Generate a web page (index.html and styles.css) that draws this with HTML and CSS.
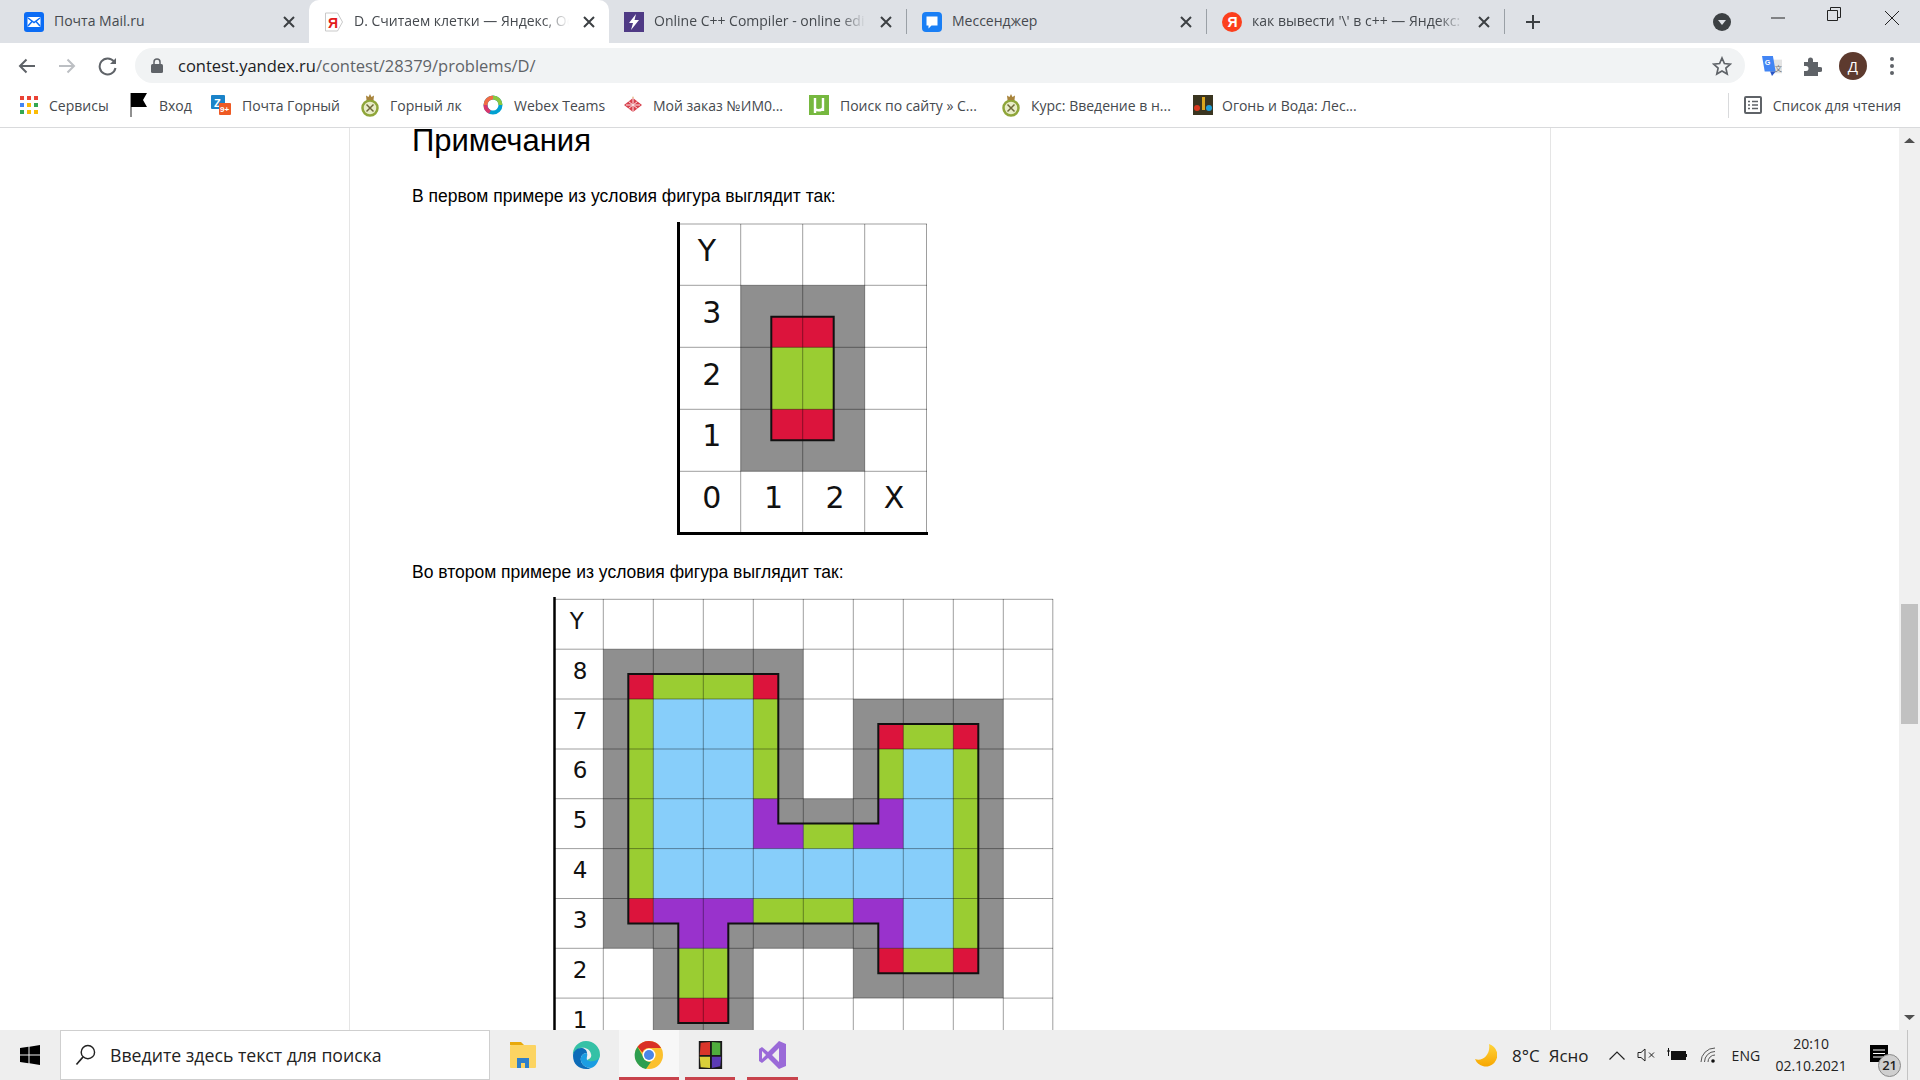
FILE: index.html
```html
<!DOCTYPE html>
<html lang="en">
<head>
    <meta charset="UTF-8">
    <title>D. Считаем клетки</title>
    <link rel="stylesheet" href="styles.css">
</head>
<body>
    <!-- Tabs -->
    <div class="tabstrip">
        <div class="tab tab-first">
            <svg class="favicon" viewBox="0 0 20 20"><rect width="20" height="20" rx="3" fill="#0b6cf5"/><rect x="3.500" y="5" width="13" height="10" rx="1" fill="#fff"/><path d="M4 6l6 4.500L16 6M4 14l4-4.500M16 14l-4-4.500" fill="none" stroke="#0b6cf5" stroke-width="1.500"/></svg>
            <span class="tab-title tab-title-full">Почта Mail.ru</span>
            <svg class="tab-close" viewBox="0 0 16 16"><path d="M3 3l10 10M13 3L3 13"/></svg>
        </div>
        <div class="tab tab-active">
            <svg class="favicon" viewBox="0 0 20 20"><path d="M1.500 1h12l5 9-5 9h-12z" fill="#fff" stroke="#c9c9c9"/><text x="4" y="15.500" class="ya-red">Я</text></svg>
            <span class="tab-title">D. Считаем клетки — Яндекс, Ос</span>
            <svg class="tab-close" viewBox="0 0 16 16"><path d="M3 3l10 10M13 3L3 13"/></svg>
        </div>
        <div class="tab tab-third">
            <svg class="favicon" viewBox="0 0 20 20"><rect width="20" height="20" fill="#4f3a85"/><path d="M12 2L5 11h4l-2 7 8-10h-4.500z" fill="#fff"/></svg>
            <span class="tab-title">Online C++ Compiler - online edi</span>
            <svg class="tab-close" viewBox="0 0 16 16"><path d="M3 3l10 10M13 3L3 13"/></svg>
        </div>
        <span class="tab-sep"></span>
        <div class="tab tab-fourth">
            <svg class="favicon" viewBox="0 0 20 20"><rect width="20" height="20" rx="4" fill="#1a7ff5"/><path d="M4.500 4.500h11v9h-6l-3 3v-3h-2z" fill="#fff"/></svg>
            <span class="tab-title tab-title-full">Мессенджер</span>
            <svg class="tab-close" viewBox="0 0 16 16"><path d="M3 3l10 10M13 3L3 13"/></svg>
        </div>
        <span class="tab-sep"></span>
        <div class="tab tab-fifth">
            <svg class="favicon" viewBox="0 0 20 20"><circle cx="10" cy="10" r="10" fill="#fc3f1d"/><text x="5.500" y="15" class="ya-white">Я</text></svg>
            <span class="tab-title">как вывести '\' в с++ — Яндекс:</span>
            <svg class="tab-close" viewBox="0 0 16 16"><path d="M3 3l10 10M13 3L3 13"/></svg>
        </div>
        <span class="tab-sep"></span>
        <svg class="new-tab" viewBox="0 0 16 16"><path d="M8 1v14M1 8h14"/></svg>
        <svg class="tab-search" viewBox="0 0 18 18"><circle cx="9" cy="9" r="9" fill="#3c4043"/><path d="M5 7h8l-4 5z" fill="#dee1e6"/></svg>
        <svg class="win-min" viewBox="0 0 14 14"><path d="M0 7h14"/></svg>
        <svg class="win-max" viewBox="0 0 14 14"><path d="M.5 3.500h10v10H.5zM3.500 3.500V.5h10v10h-3"/></svg>
        <svg class="win-close" viewBox="0 0 14 14"><path d="M0 0l14 14M14 0L0 14"/></svg>
    </div>

    <!-- Address bar -->
    <div class="toolbar">
        <svg class="nav-btn" viewBox="0 0 40 20"><path d="M28 10H13M19.500 3.500L13 10l6.500 6.500" stroke="#5f6368"/></svg>
        <svg class="nav-btn" viewBox="0 0 40 20"><path d="M12 10h15M20.500 3.500L27 10l-6.500 6.500" stroke="#bcbfc3"/></svg>
        <svg class="nav-btn" viewBox="-1 0 40 20"><path d="M26 5.500A8 8 0 1 0 27.500 12" stroke="#5f6368"/><path d="M28 2v6h-6z" fill="#5f6368" stroke="none"/></svg>
        <div class="omnibox">
            <svg class="lock" viewBox="0 0 12 15"><rect y="6" width="12" height="9" rx="1.500" fill="#5f6368"/><path d="M3 6.500V4a3 3 0 0 1 6 0v2.500" fill="none" stroke="#5f6368" stroke-width="1.500"/></svg>
            <span class="url"><span class="url-host">contest.yandex.ru</span>/contest/28379/problems/D/</span>
            <svg class="star" viewBox="0 0 20 20"><path d="M10 2l2.400 5.500 6 .6-4.500 4 1.300 5.900L10 15l-5.200 3 1.300-5.900-4.500-4 6-.6z" fill="none" stroke="#5f6368" stroke-width="1.700"/></svg>
        </div>
        <div class="ext-slot ext-first">
            <svg class="ext-icon" viewBox="0 0 22 24"><rect x="9" y="5" width="13" height="15" fill="#e4e4e4"/><path d="M0 1h12l3 17H3z" fill="#4285f4"/><path d="M9 18h6l-4 5z" fill="#2a56c6"/><text x="3" y="11" class="translate-g">G</text><text x="14" y="18" class="translate-x">文</text></svg>
        </div>
        <div class="ext-slot">
            <svg class="ext-icon" viewBox="0 0 20 20"><path d="M2 6h4V4a2.500 2.500 0 0 1 5 0v2h5v5h2a2.500 2.500 0 0 1 0 5h-2v4H2v-5h2a2.500 2.500 0 0 0 0-5H2z" fill="#5f6368"/></svg>
        </div>
        <div class="ext-slot ext-avatar"><span class="avatar">Д</span></div>
        <div class="ext-slot">
            <svg class="dots" viewBox="0 0 4 20"><circle cx="2" cy="3" r="2"/><circle cx="2" cy="10" r="2"/><circle cx="2" cy="17" r="2"/></svg>
        </div>
    </div>

    <!-- Bookmarks -->
    <div class="bookmarks">
        <div class="bookmark">
            <svg class="bm-icon" viewBox="0 0 18 18"><g><rect width="4" height="4" fill="#ea4335"/><rect x="7" width="4" height="4" fill="#ea4335"/><rect x="14" width="4" height="4" fill="#ea4335"/><rect y="7" width="4" height="4" fill="#4285f4"/><rect x="7" y="7" width="4" height="4" fill="#fbbc05"/><rect x="14" y="7" width="4" height="4" fill="#34a853"/><rect y="14" width="4" height="4" fill="#34a853"/><rect x="7" y="14" width="4" height="4" fill="#fbbc05"/><rect x="14" y="14" width="4" height="4" fill="#fbbc05"/></g></svg>
            <span>Сервисы</span>
        </div>
        <div class="bookmark">
            <svg class="bm-icon bm-flag" viewBox="0 0 18 24"><path d="M1 0v24" stroke="#222" fill="none"/><path d="M1 0h16l-4 7 4 7H1z" fill="#000"/></svg>
            <span>Вход</span>
        </div>
        <div class="bookmark">
            <svg class="bm-icon bm-wide" viewBox="0 0 20 20"><rect width="14" height="14" rx="1" fill="#1a83c9"/><text x="3" y="12" class="zm-z">Z</text><rect x="8" y="8" width="12" height="12" rx="1" fill="#ee5a24"/><text x="9" y="17" class="zm-n">9+</text></svg>
            <span>Почта Горный</span>
        </div>
        <div class="bookmark">
            <svg class="bm-icon bm-crest" viewBox="0 0 18 24"><circle cx="9" cy="15" r="7.500" fill="#e8edc8" stroke="#8fa63a" stroke-width="2.500"/><path d="M5.500 11.500l7 7M12.500 11.500l-7 7" stroke="#6f6a3a" stroke-width="1.500"/><path d="M5.500 7L5 2.500l2.500 1.500L9 1l1.500 3L13 2.500 12.500 7z" fill="#a8843c"/></svg>
            <span>Горный лк</span>
        </div>
        <div class="bookmark">
            <svg class="bm-icon bm-wide" viewBox="0 0 20 20"><circle cx="10" cy="10" r="7.500" fill="none" stroke="#00a0d1" stroke-width="4"/><path d="M10 2.500A7.500 7.500 0 0 1 17.500 10" fill="none" stroke="#8dc63f" stroke-width="4"/><path d="M2.500 10A7.500 7.500 0 0 1 10 2.500" fill="none" stroke="#f26b43" stroke-width="4"/><path d="M2.500 10A7.500 7.500 0 0 0 7 17" fill="none" stroke="#d9366b" stroke-width="4"/></svg>
            <span>Webex Teams</span>
        </div>
        <div class="bookmark">
            <svg class="bm-icon" viewBox="0 0 18 18"><path d="M9 2l9 7-9 7-9-7z" fill="#d8424e"/><path d="M4.500 5.500l9 7M13.500 5.500l-9 7M9 2v14M2 9h14" stroke="#fbe3e5"/><circle cx="9" cy="1.500" r="1" fill="#e9c9a0"/></svg>
            <span>Мой заказ №ИМ0...</span>
        </div>
        <div class="bookmark">
            <svg class="bm-icon bm-wide" viewBox="0 0 20 20"><rect width="20" height="20" fill="#76b83f"/><path d="M6 3v15M6 13c0 3 7 3 8 0M14 3v13" fill="none" stroke="#fff" stroke-width="2.400"/></svg>
            <span>Поиск по сайту » С...</span>
        </div>
        <div class="bookmark">
            <svg class="bm-icon bm-crest" viewBox="0 0 18 24"><circle cx="9" cy="15" r="7.500" fill="#e8edc8" stroke="#8fa63a" stroke-width="2.500"/><path d="M5.500 11.500l7 7M12.500 11.500l-7 7" stroke="#6f6a3a" stroke-width="1.500"/><path d="M5.500 7L5 2.500l2.500 1.500L9 1l1.500 3L13 2.500 12.500 7z" fill="#a8843c"/></svg>
            <span>Курс: Введение в н...</span>
        </div>
        <div class="bookmark bookmark-game">
            <svg class="bm-icon bm-wide" viewBox="0 0 20 20"><rect width="20" height="20" fill="#3a3520"/><path d="M9 2h3v13H9z" fill="#d9a61e"/><circle cx="4" cy="13" r="3" fill="#d9381e"/><circle cx="16" cy="13" r="3" fill="#1ea0d9"/></svg>
            <span>Огонь и Вода: Лес...</span>
        </div>
        <div class="reading-list">
            <svg class="bm-icon" viewBox="0 0 18 18"><rect x="1" y="1" width="16" height="16" rx="1" fill="none" stroke="#5f6368" stroke-width="2"/><path d="M4 5.500h2M8 5.500h6M4 9h2M8 9h6M4 12.500h2M8 12.500h6" stroke="#5f6368" stroke-width="1.500"/></svg>
            <span>Список для чтения</span>
        </div>
    </div>

    <!-- Page -->
    <div class="viewport">
        <div class="side"></div>
        <div class="content">
            <h2 class="notes-title">Примечания</h2>
            <p class="note note-first">В первом примере из условия фигура выглядит так:</p>

            <svg class="figure figure-small" viewBox="676 222 252 313" width="252" height="313">
                <rect x="740.700" y="285.300" width="124" height="186" fill="#8f8f8f"/>
                <rect x="771.300" y="316.700" width="62.400" height="123.600" fill="#dc143c"/>
                <rect x="771.300" y="347.300" width="62.400" height="62" fill="#9acd32"/>
                <g class="grid-lines">
                    <path d="M740.700 224v308M802.700 224v308M864.700 224v308M926.500 224v308"/>
                    <path d="M678 224h249M678 285.300h249M678 347.300h249M678 409.300h249M678 471.300h249"/>
                </g>
                <path class="shape-line" d="M771.300 316.700h62.400v123.600h-62.400z"/>
                <path class="axis" d="M678.500 222v311.500H928"/>
                <text class="cell-big" x="707" y="261">Y</text>
                <text class="cell-big" x="711.700" y="322.500">3</text>
                <text class="cell-big" x="711.700" y="384.500">2</text>
                <text class="cell-big" x="711.700" y="446">1</text>
                <text class="cell-big" x="711.700" y="508">0</text>
                <text class="cell-big" x="773.500" y="508">1</text>
                <text class="cell-big" x="835" y="508">2</text>
                <text class="cell-big" x="894" y="508">X</text>
            </svg>

            <p class="note note-second">Во втором примере из условия фигура выглядит так:</p>

            <svg class="figure figure-large" viewBox="552 597 503 500" width="503" height="500">
                <path fill="#8f8f8f" d="M603.300 649.200H803.300V798.700H853.300V699H1003.300V998.100H853.300V948.300H753.300V1048H653.300V948.300H603.300z"/>
                <path fill="#87cefa" d="M628.300 674.100H778.300V823.600H878.300V724H978.300V973.200H878.300V923.400H728.300V1023.100H678.300V923.400H628.300z"/>
                <g fill="#9acd32">
                    <rect x="628.300" y="674.100" width="150" height="25"/>
                    <rect x="628.300" y="699" width="25" height="224.400"/>
                    <rect x="753.300" y="699" width="25" height="100"/>
                    <rect x="678.300" y="948.300" width="50" height="50"/>
                    <rect x="803.300" y="823.600" width="50" height="25"/>
                    <rect x="753.300" y="898.500" width="100" height="25"/>
                    <rect x="878.300" y="724" width="100" height="25"/>
                    <rect x="878.300" y="749" width="25" height="50"/>
                    <rect x="953.300" y="749" width="25" height="224.200"/>
                    <rect x="878.300" y="948.300" width="100" height="25"/>
                </g>
                <path fill="#9932cc" d="M753.300 798.700h25v24.900h25v25h-50zM853.300 823.600h25v-24.900h25v49.900h-50zM653.300 898.500h100v25h-25v24.800h-50v-24.800h-25zM853.300 898.500h50v49.800h-25v-24.900h-25z"/>
                <g fill="#dc143c">
                    <rect x="628.300" y="674.100" width="25" height="25"/>
                    <rect x="753.300" y="674.100" width="25" height="25"/>
                    <rect x="628.300" y="898.500" width="25" height="25"/>
                    <rect x="678.300" y="998.100" width="50" height="25"/>
                    <rect x="878.300" y="724" width="25" height="25"/>
                    <rect x="953.300" y="724" width="25" height="25"/>
                    <rect x="878.300" y="948.300" width="25" height="25"/>
                    <rect x="953.300" y="948.300" width="25" height="25"/>
                </g>
                <g class="grid-lines">
                    <path d="M603.300 599v498M653.300 599v498M703.300 599v498M753.300 599v498M803.300 599v498M853.300 599v498M903.300 599v498M953.300 599v498M1003.300 599v498M1052.800 599v498"/>
                    <path d="M554 599.300h499M554 649.200h499M554 699h499M554 749h499M554 798.700h499M554 848.600h499M554 898.500h499M554 948.300h499M554 998.100h499"/>
                </g>
                <path class="shape-line" d="M628.300 674.100H778.300V823.600H878.300V724H978.300V973.200H878.300V923.400H728.300V1023.100H678.300V923.400H628.300z"/>
                <path class="axis axis-thin" d="M554.500 597v500"/>
                <text class="cell-small" x="576.700" y="629">Y</text>
                <text class="cell-small" x="580" y="678.500">8</text>
                <text class="cell-small" x="580" y="728.500">7</text>
                <text class="cell-small" x="580" y="778">6</text>
                <text class="cell-small" x="580" y="828">5</text>
                <text class="cell-small" x="580" y="878">4</text>
                <text class="cell-small" x="580" y="928">3</text>
                <text class="cell-small" x="580" y="978">2</text>
                <text class="cell-small" x="580" y="1028">1</text>
            </svg>
        </div>
        <div class="side side-right"></div>
        <div class="scrollbar">
            <svg class="scroll-arrow" viewBox="0 0 21 24"><path d="M5 15l5.500-5 5.500 5z"/></svg>
            <div class="scroll-thumb"></div>
            <svg class="scroll-arrow scroll-arrow-down" viewBox="0 0 21 24"><path d="M5 9l5.500 5 5.500-5z"/></svg>
        </div>
    </div>

    <!-- Windows taskbar -->
    <div class="taskbar">
        <div class="start">
            <svg class="start-icon" viewBox="0 0 20 20"><path d="M0 3l8.500-1.200v7.700H0zM9.500 1.700L20 0v9.500H9.500zM0 10.500h8.500v7.700L0 17zM9.500 10.500H20V20L9.500 18.300z" fill="#000"/></svg>
        </div>
        <div class="search">
            <svg class="search-icon" viewBox="0 0 22 24"><circle cx="13.500" cy="9" r="7" fill="none" stroke="#222" stroke-width="1.500"/><path d="M8.500 14L1.500 22" stroke="#222" stroke-width="1.700"/></svg>
            <span>Введите здесь текст для поиска</span>
        </div>
        <div class="app app-explorer">
            <svg class="app-icon" viewBox="0 0 28 28"><path d="M1 1h11l3 3H1z" fill="#e8a90c"/><rect x="1" y="4" width="26" height="23" rx="1" fill="#fcd462"/><path d="M8 27v-10h12v10h-4v-5h-4v5z" fill="#2f7fc9"/></svg>
        </div>
        <div class="app app-edge">
            <svg class="app-icon app-icon-large" viewBox="0 0 30 30"><path d="M15 1a14 14 0 0 1 14 14c0 5-4 7-8 7-3 0-5-1-5-2 3-1 5-3 4-6-1-5-6-7-10-6C5 9 2 13 2 16 1 8 7 1 15 1z" fill="#35c1a6"/><path d="M2 16c0-5 4-8 8-8 3 0 6 2 6 5-4 0-7 3-6 8 1 4 5 7 10 7-2 1-3 1-5 1C8 29 2 24 2 16z" fill="#0c6cb8"/><path d="M16 20c3 2 9 2 12-2-1 5-4 9-8 10-5 0-9-3-10-7-1-5 2-8 6-8 1 2-1 5 0 7z" fill="#1b9de2"/></svg>
        </div>
        <div class="app app-chrome">
            <svg class="app-icon app-icon-large" viewBox="0 0 30 30"><circle cx="15" cy="15" r="14" fill="#fbc02d"/><path d="M15 1a14 14 0 0 1 12.100 7H15a7 7 0 0 0-6.600 4.500L3.500 6.800A14 14 0 0 1 15 1z" fill="#d93025"/><path d="M3.500 6.800l6 10.500a7 7 0 0 0 7.500 4.500L12 29A14 14 0 0 1 3.500 6.800z" fill="#2e9e4f"/><circle cx="15" cy="15" r="6.500" fill="#fff"/><circle cx="15" cy="15" r="5" fill="#4a86e8"/></svg>
        </div>
        <div class="app app-blocks">
            <svg class="app-icon" viewBox="0 0 28 30"><path d="M2 0h25v30H2z" fill="#1a1a1a"/><path d="M4 2l10-1v14H3z" fill="#d9352a"/><path d="M16 1l9 1v13h-9z" fill="#4fae3d"/><path d="M3 17h11v12l-10-1z" fill="#d9cf3a"/><path d="M16 17h10l-1 10-9 2z" fill="#5b3bb5"/></svg>
        </div>
        <div class="app app-vs">
            <svg class="app-icon app-icon-large" viewBox="0 0 30 30"><path d="M21 1l7 3v22l-7 3-11-11-6 5-3-2v-12l3-2 6 5z" fill="#9a6ad8"/><path d="M21 8l-7 7 7 7zM4 11v8l4-4z" fill="#eee"/></svg>
        </div>
        <div class="tray">
            <svg class="tray-moon" viewBox="0 0 22 23"><defs><linearGradient id="moonFill" x1="0" y1="0" x2="0" y2="1"><stop offset="0" stop-color="#ffd43b"/><stop offset="1" stop-color="#f7a600"/></linearGradient></defs><path d="M14 0a11.500 11.500 0 1 1-14 15c7 3 16-4 14-15z" fill="url(#moonFill)"/></svg>
            <span class="weather weather-temp">8°C</span>
            <span class="weather weather-text">Ясно</span>
            <svg class="tray-chevron" viewBox="0 0 16 9"><path d="M.5 8.500L8 1l7.500 7.500"/></svg>
            <svg class="tray-sound" viewBox="0 0 18 14"><path d="M1 4.500h3L8 1v12L4 9.500H1z" fill="none" stroke="#222"/><path d="M12 4.500l5 5M17 4.500l-5 5" stroke="#222" fill="none"/></svg>
            <svg class="tray-battery" viewBox="0 0 20 14"><path d="M0 3h3M1.500 0v5M1.500 5v3" stroke="#111" fill="none"/><rect x="4" y="3" width="15" height="9" fill="#111"/><rect x="19" y="6" width="1" height="3" fill="#111"/></svg>
            <svg class="tray-wifi" viewBox="0 0 16 16"><path d="M1 15a14 14 0 0 1 14-14M4.500 15a10.500 10.500 0 0 1 10.500-10.500M8 15a7 7 0 0 1 7-7" fill="none" stroke="#555"/><circle cx="13" cy="14" r="1.800" fill="#111"/></svg>
            <span class="tray-lang">ENG</span>
            <div class="clock"><span>20:10</span><span>02.10.2021</span></div>
            <div class="notify">
                <svg class="notify-icon" viewBox="0 0 18 17"><rect width="18" height="17" fill="#000"/><path d="M3 5h12M3 8.500h12M3 12h12" stroke="#fff"/></svg>
                <span class="notify-badge">21</span>
            </div>
            <span class="show-desktop"></span>
        </div>
    </div>
</body>
</html>
```

FILE: styles.css
```css
* {
    box-sizing: border-box;
}
html, body {
    margin: 0;
    height: 100%;
}
body {
    width: 1920px;
    height: 1080px;
    overflow: hidden;
    display: flex;
    flex-direction: column;
    background-color: #fff;
    color: #3c4043;
    font-family: "Open Sans", "Noto Sans", sans-serif;
}

/* tabs */
.tabstrip {
    height: 43px;
    flex: none;
    display: flex;
    align-items: center;
    padding-left: 9px;
    background-color: #dee1e6;
}
.tab {
    height: 43px;
    flex: none;
    display: flex;
    align-items: center;
    padding: 0 12px 0 15px;
    font-size: 14px;
    color: #45494e;
}
.tab-first, .tab-active {
    width: 300px;
}
.tab-third {
    width: 297px;
}
.tab-fourth {
    width: 299px;
}
.tab-fifth {
    width: 297px;
}
.tab-active {
    background-color: #fff;
    border-radius: 10px 10px 0 0;
}
.favicon {
    width: 20px;
    height: 20px;
    flex: none;
    margin-right: 10px;
}
.tab-title {
    flex: 1;
    min-width: 0;
    margin-bottom: 2px;
    white-space: nowrap;
    -webkit-mask-image: linear-gradient(to right, #000 calc(100% - 30px), transparent calc(100% - 4px));
    mask-image: linear-gradient(to right, #000 calc(100% - 30px), transparent calc(100% - 4px));
}
.tab-title-full {
    -webkit-mask-image: none;
    mask-image: none;
}
.tab-close {
    width: 16px;
    height: 16px;
    flex: none;
    margin-left: 8px;
    fill: none;
    stroke: #3c4043;
    stroke-width: 2;
}
.tab-sep {
    width: 1px;
    height: 25px;
    flex: none;
    background-color: #9aa0a6;
}
.new-tab {
    width: 16px;
    height: 16px;
    flex: none;
    margin-left: 20px;
    fill: none;
    stroke: #3c4043;
    stroke-width: 2;
}
.tab-search {
    width: 18px;
    height: 18px;
    flex: none;
    margin-left: 172px;
}
.win-min, .win-max, .win-close {
    flex: none;
    width: 14px;
    height: 14px;
    fill: none;
    stroke: #222;
    stroke-width: 1;
    margin-bottom: 7px;
}
.win-min {
    margin-left: 40px;
}
.win-max {
    margin-left: 42px;
    margin-bottom: 15px;
}
.win-close {
    margin-left: 44px;
}
.ya-red {
    font: bold 14px "Liberation Sans", sans-serif;
    fill: #e21a1a;
}
.ya-white {
    font: bold 14px "Liberation Sans", sans-serif;
    fill: #fff;
}

/* toolbar */
.toolbar {
    height: 40px;
    flex: none;
    display: flex;
    align-items: stretch;
    padding: 5px 0 0 7px;
}
.nav-btn {
    width: 40px;
    height: 20px;
    flex: none;
    align-self: center;
    fill: none;
    stroke-width: 2;
}
.omnibox {
    width: 1610px;
    flex: none;
    margin-left: 8px;
    display: flex;
    align-items: center;
    padding: 0 13px 0 16px;
    border-radius: 18px;
    background-color: #f1f3f4;
}
.lock {
    width: 12px;
    height: 15px;
    flex: none;
}
.url {
    flex: 1;
    margin-left: 15px;
    font-size: 16.500px;
    color: #5f6368;
}
.url-host {
    color: #202124;
}
.star {
    width: 20px;
    height: 20px;
    flex: none;
}
.ext-first {
    margin-left: 7px;
}
.ext-slot {
    width: 40px;
    flex: none;
    display: flex;
    align-items: center;
    justify-content: center;
}
.ext-avatar {
    padding-left: 2px;
}
.ext-icon {
    width: 20px;
    height: 22px;
}
.translate-g {
    font: bold 8px "Liberation Sans", sans-serif;
    fill: #fff;
}
.translate-x {
    font: 8px "Noto Sans CJK SC", sans-serif;
    fill: #777;
}
.avatar {
    width: 28px;
    height: 28px;
    border-radius: 50%;
    background-color: #5d3a2e;
    color: #fff;
    font-size: 15px;
    line-height: 28px;
    text-align: center;
}
.dots {
    width: 4px;
    height: 20px;
    fill: #5f6368;
}

/* bookmarks */
.bookmarks {
    height: 45px;
    flex: none;
    display: grid;
    grid-template-columns: 110px 81px 150px 122px 141px 185px 193px 191px 1fr auto;
    align-items: center;
    padding-left: 20px;
    border-bottom: 1px solid #d9dadc;
    font-size: 14px;
    color: #45494e;
}
.bookmark {
    display: flex;
    align-items: center;
    gap: 11px;
    white-space: nowrap;
}
.bookmark-game {
    gap: 9px;
}
.bm-icon {
    width: 18px;
    height: 18px;
    flex: none;
}
.bm-wide {
    width: 20px;
    height: 20px;
}
.bm-flag {
    height: 24px;
}
.bm-crest {
    height: 24px;
}
.zm-z {
    font: bold 11px "Liberation Sans", sans-serif;
    fill: #fff;
}
.zm-n {
    font: bold 8px "Liberation Sans", sans-serif;
    fill: #fff;
}
.reading-list {
    display: flex;
    align-items: center;
    gap: 11px;
    height: 25px;
    padding: 0 19px 0 15px;
    border-left: 1px solid #d9dadc;
}

/* page */
.viewport {
    flex: 1;
    min-height: 0;
    overflow: hidden;
    display: flex;
}
.side {
    width: 349px;
    flex: none;
}
.side-right {
    width: 348px;
}
.content {
    width: 1202px;
    flex: none;
    padding-left: 62px;
    border-left: 1px solid #e5e5e5;
    border-right: 1px solid #e5e5e5;
    font-family: "Liberation Sans", Arial, sans-serif;
    color: #000;
}
.notes-title {
    margin: 0;
    padding-top: 1px;
    font-size: 31px;
    font-weight: normal;
    line-height: 24px;
}
.note {
    margin: 0;
    font-size: 17.500px;
    line-height: 24px;
}
.note-first {
    margin-top: 31px;
}
.note-second {
    margin-top: 25px;
}
.figure {
    display: block;
}
.figure-small {
    margin: 14px 0 0 264px;
}
.figure-large {
    margin: 13px 0 0 140px;
}
.grid-lines {
    fill: none;
    stroke: rgba(0, 0, 0, 0.38);
    stroke-width: 1;
}
.shape-line {
    fill: none;
    stroke: #111;
    stroke-width: 2;
}
.axis {
    fill: none;
    stroke: #000;
    stroke-width: 3;
}
.axis-thin {
    stroke-width: 2.500;
}
.cell-big, .cell-small {
    font-family: "DejaVu Sans", sans-serif;
    text-anchor: middle;
    fill: #111;
}
.cell-big {
    font-size: 30px;
}
.cell-small {
    font-size: 23px;
}

/* scrollbar */
.scrollbar {
    width: 21px;
    flex: none;
    display: flex;
    flex-direction: column;
    background-color: #f0f0f0;
}
.scroll-arrow {
    width: 21px;
    height: 24px;
    flex: none;
    fill: #505050;
}
.scroll-thumb {
    width: 17px;
    height: 120px;
    margin: 452px 0 0 2px;
    background-color: #c1c1c1;
}
.scroll-arrow-down {
    margin-top: auto;
}

/* taskbar */
.taskbar {
    height: 50px;
    flex: none;
    display: flex;
    align-items: stretch;
    background-color: #eeeeee;
    color: #222;
}
.start {
    width: 60px;
    flex: none;
    display: flex;
    align-items: center;
    justify-content: center;
}
.start-icon {
    width: 20px;
    height: 20px;
}
.search {
    width: 430px;
    flex: none;
    display: flex;
    align-items: center;
    gap: 14px;
    padding-left: 14px;
    background-color: #fff;
    border: 1px solid #cfcfcf;
    font-size: 17.700px;
}
.search-icon {
    width: 21px;
    height: 24px;
    flex: none;
}
.app {
    flex: none;
    display: flex;
    align-items: center;
    justify-content: center;
}
.app-icon {
    width: 28px;
    height: 28px;
}
.app-icon-large {
    width: 30px;
    height: 30px;
}
.app-explorer {
    width: 50px;
    margin-left: 8px;
}
.app-edge {
    width: 50px;
    margin-left: 13px;
}
.app-chrome, .app-blocks, .app-vs {
    border-bottom: 3px solid #c8434c;
    padding-top: 3px;
}
.app-chrome {
    width: 60px;
    margin-left: 8px;
    background-color: #f7f7f7;
}
.app-blocks {
    width: 50px;
    margin-left: 6px;
}
.app-vs {
    width: 51px;
    margin-left: 12px;
}
.tray {
    flex: 1;
    display: flex;
    align-items: center;
    margin-left: 677px;
    font-size: 15px;
}
.tray-moon {
    width: 22px;
    height: 23px;
    flex: none;
}
.weather {
    font-size: 17px;
}
.weather-temp {
    margin-left: 15px;
}
.weather-text {
    margin-left: 9px;
}
.tray-chevron {
    width: 16px;
    height: 9px;
    flex: none;
    margin-left: 20px;
    fill: none;
    stroke: #222;
    stroke-width: 1.200;
}
.tray-sound {
    width: 18px;
    height: 14px;
    flex: none;
    margin-left: 12px;
}
.tray-battery {
    width: 20px;
    height: 14px;
    flex: none;
    margin-left: 12px;
}
.tray-wifi {
    width: 16px;
    height: 16px;
    flex: none;
    margin-left: 13px;
}
.tray-lang {
    margin-left: 16px;
    font-size: 14px;
}
.clock {
    width: 74px;
    margin-left: 14px;
    display: flex;
    flex-direction: column;
    align-items: center;
    gap: 2px;
    line-height: 20px;
    font-size: 14px;
}
.notify {
    position: relative;
    width: 18px;
    height: 17px;
    flex: none;
    margin: 0 0 3px 22px;
}
.notify-icon {
    display: block;
    width: 18px;
    height: 17px;
}
.notify-badge {
    position: absolute;
    left: 8px;
    top: 9px;
    width: 23px;
    height: 23px;
    border-radius: 50%;
    background-color: #cfcfcf;
    border: 1px solid #8a8a8a;
    font-size: 13px;
    font-weight: 600;
    line-height: 21px;
    text-align: center;
}
.show-desktop {
    width: 1px;
    height: 50px;
    flex: none;
    margin-left: 19px;
    background-color: #c4c4c4;
}
```
